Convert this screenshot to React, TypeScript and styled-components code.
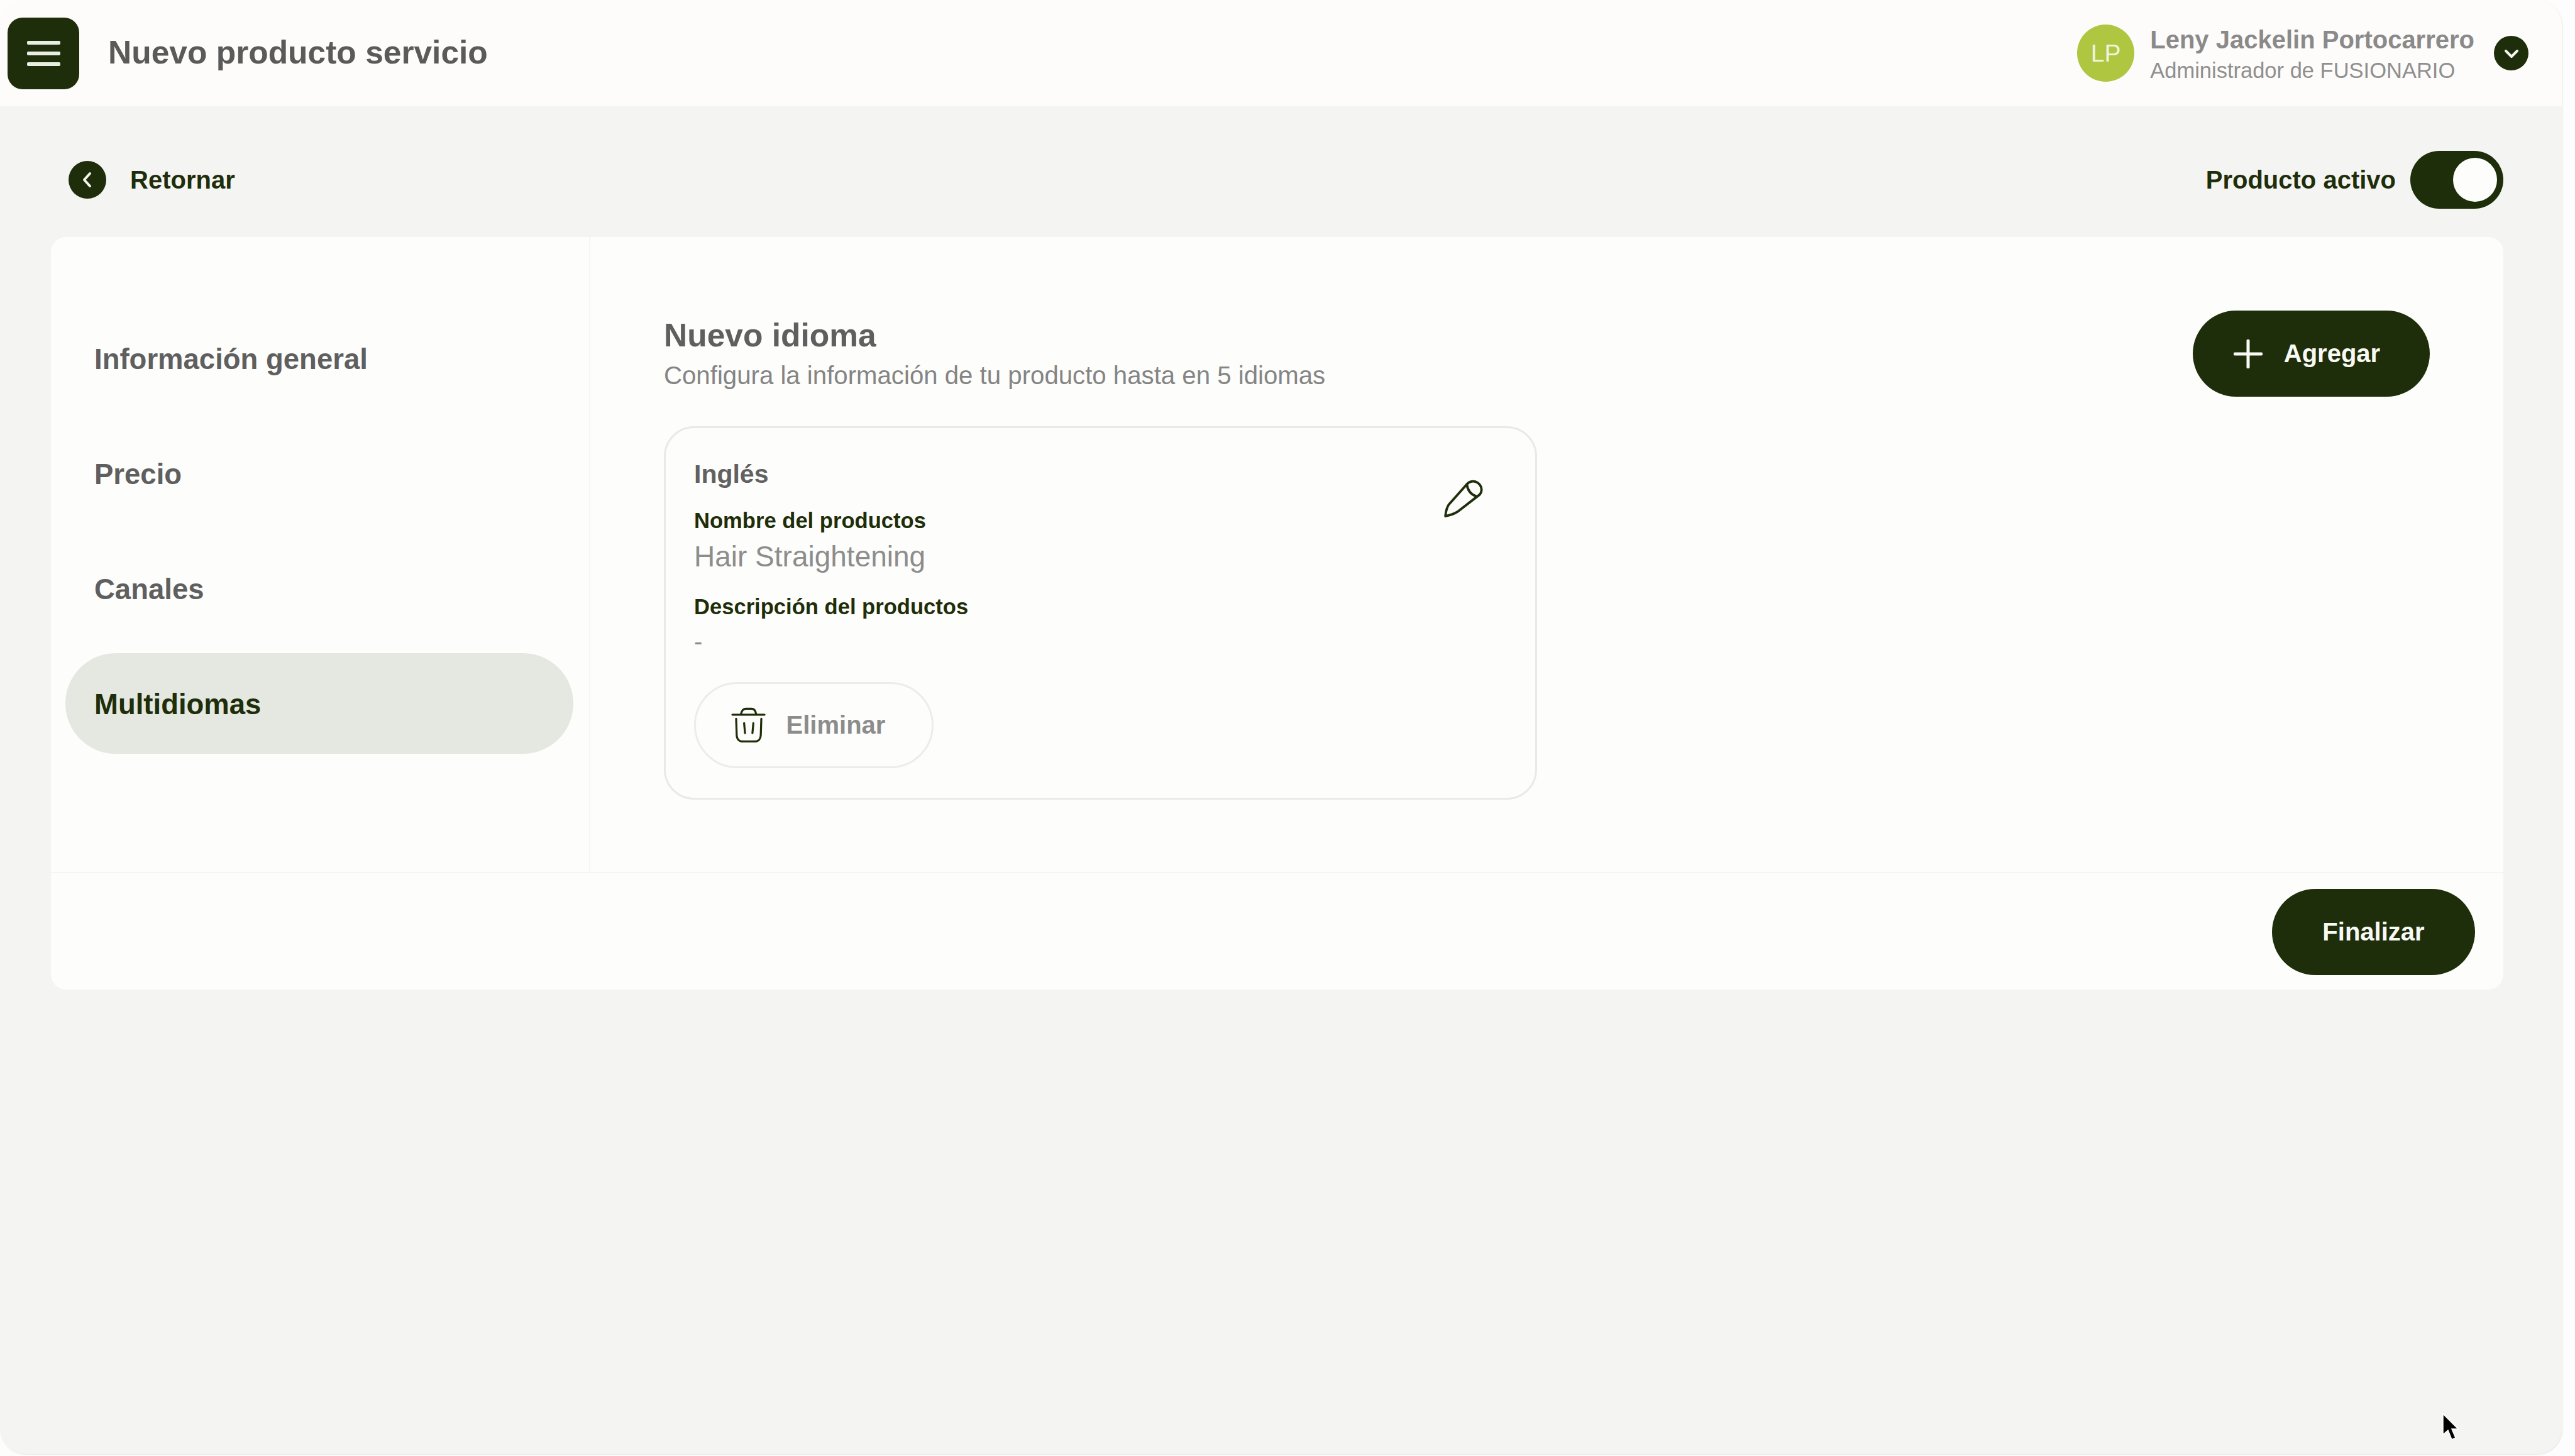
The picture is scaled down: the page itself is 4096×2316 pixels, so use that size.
import React from "react";
import styled, { createGlobalStyle } from "styled-components";

const Global = createGlobalStyle`
  html, body { margin: 0; padding: 0; background: #fcfdfc; }
  body { font-family: "Liberation Sans", Arial, sans-serif; width: 4096px; height: 2316px; overflow: hidden; }
  * { box-sizing: border-box; }
`;

const Frame = styled.div`
  position: relative;
  width: 4075px;
  height: 2313px;
  background: #f4f4f3;
  border-radius: 40px;
  overflow: hidden;
  box-shadow: 1px 1px 2px #e6e7e6;
`;

const Header = styled.header`
  height: 169px;
  background: #fdfcfa;
  display: flex;
  align-items: center;
  padding: 0 53px 0 12px;
`;

const MenuButton = styled.button`
  width: 114px;
  height: 114px;
  border: 0;
  border-radius: 24px;
  background: #1f2e0a;
  display: flex;
  flex-direction: column;
  align-items: center;
  justify-content: center;
  gap: 11px;
  padding: 0;
`;

const MenuLine = styled.span`
  width: 53px;
  height: 6px;
  border-radius: 2px;
  background: #e8efe2;
`;

const PageTitle = styled.h1`
  margin: 0 0 4px 46px;
  font-size: 51.5px;
  font-weight: 700;
  color: #5a5a5a;
`;

const Spacer = styled.div`
  flex: 1;
`;

const Avatar = styled.div`
  width: 91px;
  height: 91px;
  border-radius: 50%;
  background: #aec640;
  color: #f0f4dc;
  font-size: 39px;
  display: flex;
  align-items: center;
  justify-content: center;
`;

const UserBlock = styled.div`
  margin-left: 25px;
  padding-top: 3px;
  display: flex;
  flex-direction: column;
  gap: 6px;
`;

const UserName = styled.div`
  font-size: 40px;
  line-height: 46px;
  font-weight: 700;
  color: #8a8a8a;
`;

const UserRole = styled.div`
  font-size: 34.5px;
  line-height: 40px;
  color: #8f8f8f;
`;

const RoundIcon = styled.span<{ $size: number }>`
  width: ${(p) => p.$size}px;
  height: ${(p) => p.$size}px;
  border-radius: 50%;
  background: #1f2e0a;
  display: flex;
  align-items: center;
  justify-content: center;
  flex: none;
`;

const ChevronWrap = styled.div`
  margin-left: 31px;
`;

const Main = styled.main`
  padding: 0 93px 0 81px;
`;

const SubBar = styled.div`
  height: 208px;
  display: flex;
  align-items: center;
  justify-content: space-between;
  padding: 26px 0 0 28px;
`;

const BackLink = styled.div`
  display: flex;
  align-items: center;
  gap: 38px;
  font-size: 40px;
  font-weight: 700;
  color: #1f2e0a;
`;

const ToggleRow = styled.div`
  display: flex;
  align-items: center;
  gap: 23px;
  font-size: 40px;
  font-weight: 700;
  color: #1f2e0a;
`;

const Toggle = styled.div`
  width: 148px;
  height: 92px;
  border-radius: 46px;
  background: #1f2e0a;
  display: flex;
  align-items: center;
  justify-content: flex-end;
  padding-right: 10px;
`;

const Knob = styled.span`
  width: 70px;
  height: 70px;
  border-radius: 50%;
  background: #fdfdfb;
`;

const Card = styled.section`
  background: #fdfdfb;
  border-radius: 24px;
  display: flex;
  flex-direction: column;
`;

const CardBody = styled.div`
  height: 1012px;
  display: flex;
  border-bottom: 2px solid #f5f5f3;
`;

const Sidebar = styled.nav`
  width: 858px;
  flex: none;
  border-right: 2px solid #f5f5f3;
  padding: 113px 25px 0 23px;
  display: flex;
  flex-direction: column;
  gap: 23px;
`;

const NavItem = styled.div<{ $active?: boolean }>`
  height: 160px;
  border-radius: 80px;
  display: flex;
  align-items: center;
  padding: 4px 0 0 46px;
  font-size: 45.5px;
  font-weight: 700;
  color: ${(p) => (p.$active ? "#1f2e0a" : "#5f5f5f")};
  background: ${(p) => (p.$active ? "#e4e8e0" : "transparent")};
`;

const Content = styled.div`
  flex: 1;
  padding: 117px 117px 0 117px;
`;

const ContentHead = styled.div`
  display: flex;
  justify-content: space-between;
  align-items: flex-start;
`;

const HeadText = styled.div`
  padding-top: 9px;
`;

const SectionTitle = styled.h2`
  margin: 0;
  font-size: 51.5px;
  line-height: 60px;
  font-weight: 700;
  color: #5f5f5f;
`;

const SectionSub = styled.p`
  margin: 10px 0 0;
  font-size: 40.2px;
  line-height: 50px;
  color: #858585;
`;

const DarkButton = styled.button<{ $w: number; $endPad: number }>`
  width: ${(p) => p.$w}px;
  height: 137px;
  border: 0;
  border-radius: 69px;
  background: #1f2e0a;
  color: #f8f9f5;
  font-family: inherit;
  font-size: 40px;
  font-weight: 700;
  display: flex;
  align-items: center;
  justify-content: center;
  gap: 34px;
  padding: 0 ${(p) => p.$endPad}px 0 0;
`;

const LangCard = styled.article`
  position: relative;
  margin-top: 47px;
  width: 1389px;
  height: 594px;
  border: 3px solid #e9e9e7;
  border-radius: 48px;
  padding: 49px 45px 0;
`;

const LangName = styled.div`
  font-size: 41px;
  line-height: 48px;
  font-weight: 700;
  color: #616161;
`;

const FieldLabel = styled.div<{ $top: number }>`
  margin-top: ${(p) => p.$top}px;
  font-size: 34.6px;
  line-height: 42px;
  font-weight: 700;
  color: #1f2e0a;
`;

const FieldValue = styled.div<{ $size: number; $top: number }>`
  margin-top: ${(p) => p.$top}px;
  font-size: ${(p) => p.$size}px;
  line-height: 54px;
  color: #8d8d8d;
`;

const EditIcon = styled.span`
  position: absolute;
  top: 63px;
  right: 67px;
  display: flex;
`;

const GhostButton = styled.button`
  margin-top: 38px;
  width: 381px;
  height: 137px;
  border: 3px solid #ececea;
  border-radius: 69px;
  background: transparent;
  font-family: inherit;
  font-size: 40px;
  font-weight: 700;
  color: #8c8c8c;
  display: flex;
  align-items: center;
  justify-content: center;
  gap: 32px;
  padding: 0 18px 0 0;
`;

const Footer = styled.div`
  height: 185px;
  display: flex;
  align-items: flex-start;
  justify-content: flex-end;
  padding: 25px 45px 0 0;
`;

const Cursor = styled.svg`
  position: absolute;
  left: 3884px;
  top: 2248px;
`;

export default function App() {
  return (
    <>
      <Global />
      <Frame>
        <Header>
          <MenuButton>
            <MenuLine />
            <MenuLine />
            <MenuLine />
          </MenuButton>
          <PageTitle>Nuevo producto servicio</PageTitle>
          <Spacer />
          <Avatar>LP</Avatar>
          <UserBlock>
            <UserName>Leny Jackelin Portocarrero</UserName>
            <UserRole>Administrador de FUSIONARIO</UserRole>
          </UserBlock>
          <ChevronWrap>
            <RoundIcon $size={55}>
              <svg width="30" height="30" viewBox="0 0 30 30" fill="none" stroke="#f4f6ef" strokeWidth="4" strokeLinecap="round" strokeLinejoin="round">
                <path d="M6 11l9 9 9-9" />
              </svg>
            </RoundIcon>
          </ChevronWrap>
        </Header>
        <Main>
          <SubBar>
            <BackLink>
              <RoundIcon $size={60}>
                <svg width="32" height="32" viewBox="0 0 32 32" fill="none" stroke="#f4f6ef" strokeWidth="4" strokeLinecap="round" strokeLinejoin="round">
                  <path d="M20 6l-9 10 9 10" />
                </svg>
              </RoundIcon>
              Retornar
            </BackLink>
            <ToggleRow>
              Producto activo
              <Toggle>
                <Knob />
              </Toggle>
            </ToggleRow>
          </SubBar>
          <Card>
            <CardBody>
              <Sidebar>
                <NavItem>Información general</NavItem>
                <NavItem>Precio</NavItem>
                <NavItem>Canales</NavItem>
                <NavItem $active>Multidiomas</NavItem>
              </Sidebar>
              <Content>
                <ContentHead>
                  <HeadText>
                    <SectionTitle>Nuevo idioma</SectionTitle>
                    <SectionSub>Configura la información de tu producto hasta en 5 idiomas</SectionSub>
                  </HeadText>
                  <DarkButton $w={377} $endPad={14}>
                    <svg width="46" height="46" viewBox="0 0 46 46" fill="none" stroke="#f8f9f5" strokeWidth="5" strokeLinecap="round">
                      <path d="M23 2v42M2 23h42" />
                    </svg>
                    Agregar
                  </DarkButton>
                </ContentHead>
                <LangCard>
                  <LangName>Inglés</LangName>
                  <FieldLabel $top={29}>Nombre del productos</FieldLabel>
                  <FieldValue $size={46} $top={9}>Hair Straightening</FieldValue>
                  <FieldLabel $top={32}>Descripción del productos</FieldLabel>
                  <FieldValue $size={40} $top={7}>-</FieldValue>
                  <EditIcon>
                    <svg width="97" height="97" viewBox="0 0 330 330" fill="none" stroke="#1f2e0a" strokeWidth="13" strokeLinecap="round" strokeLinejoin="round">
                      <path d="M72 262C74 240 80 215 90 200L186 92C200 74 225 68 245 80C268 94 275 125 258 145L138 238C120 250 95 258 72 262Z" />
                      <path d="M188 90C192 120 210 145 240 155" />
                    </svg>
                  </EditIcon>
                  <GhostButton>
                    <svg width="56" height="58" viewBox="65 60 190 197" fill="none" stroke="#1f2e0a" strokeWidth="11" strokeLinecap="round" strokeLinejoin="round">
                      <path d="M72 100H245" />
                      <path d="M118 97C122 78 130 68 145 68H175C190 68 197 78 200 97" />
                      <path d="M92 122L95 212C96 232 108 245 128 245H192C212 245 224 232 225 212L228 122" />
                      <path d="M135 146L140 200M185 146L180 200" />
                    </svg>
                    Eliminar
                  </GhostButton>
                </LangCard>
              </Content>
            </CardBody>
            <Footer>
              <DarkButton $w={323} $endPad={0}>Finalizar</DarkButton>
            </Footer>
          </Card>
        </Main>
        <Cursor width="28" height="44" viewBox="0 0 28 44">
          <path d="M2 1v33l8-7 6 15 6-3-6-14h10z" fill="#000" stroke="#fff" strokeWidth="1.5" />
        </Cursor>
      </Frame>
    </>
  );
}
